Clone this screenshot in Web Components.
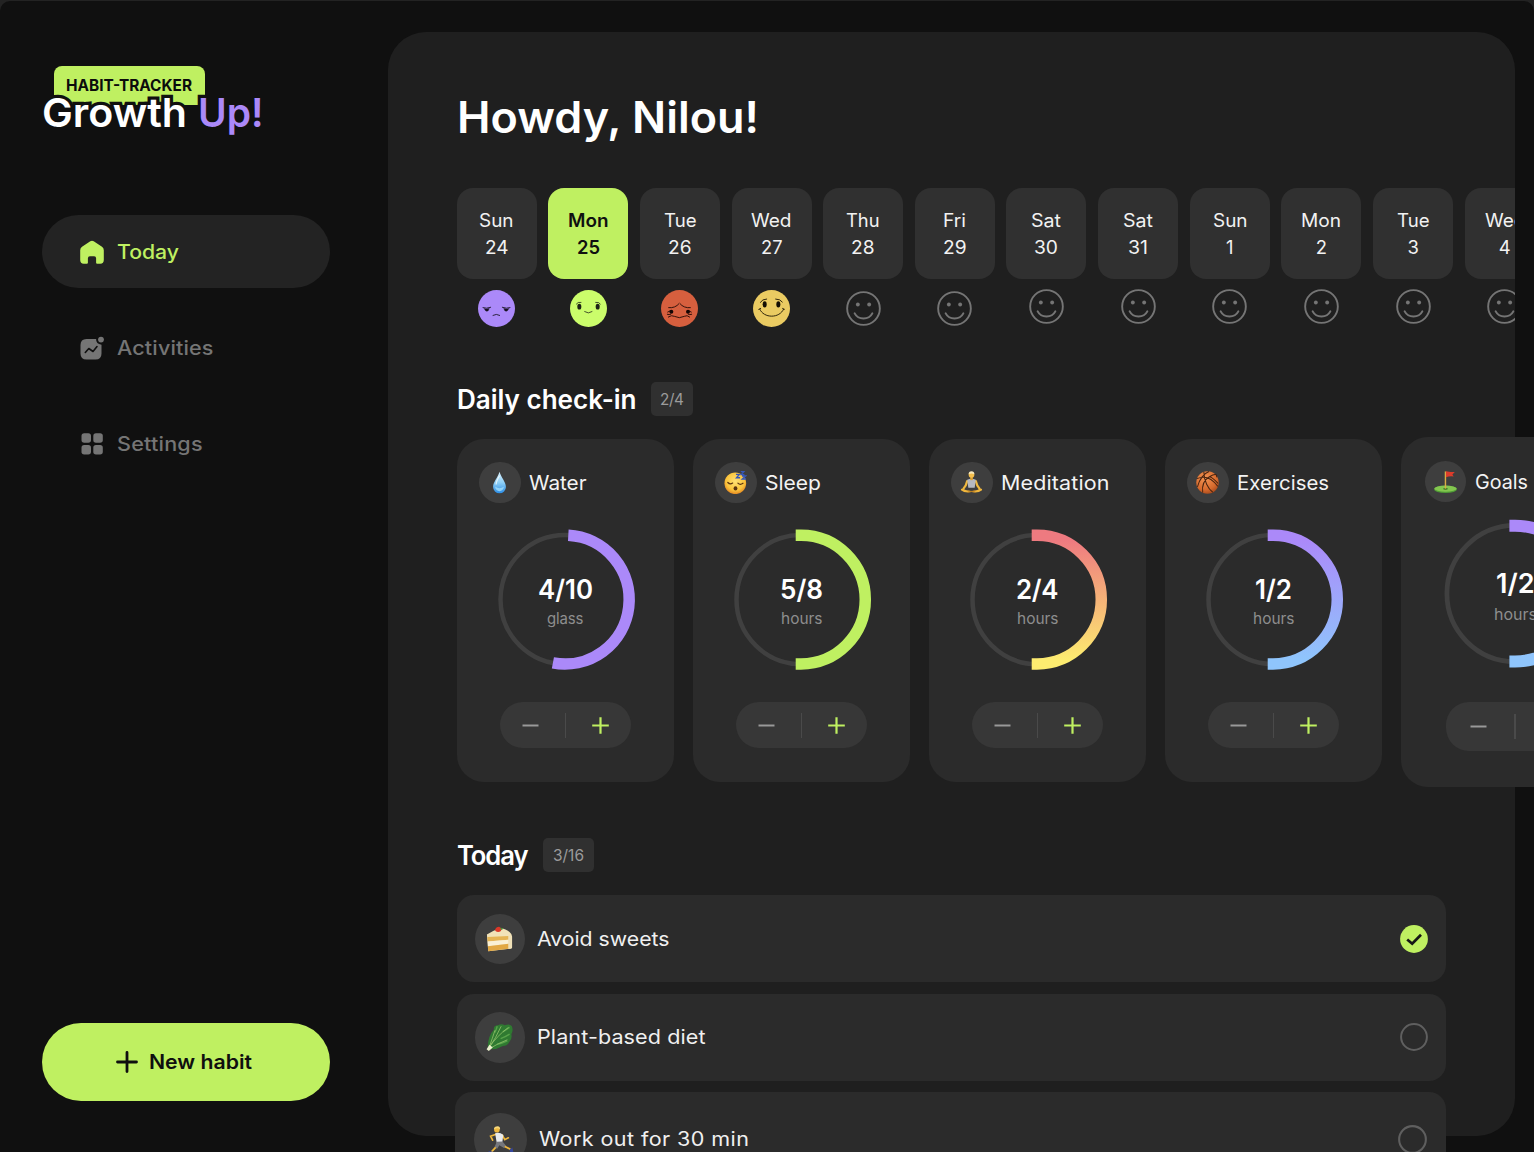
<!DOCTYPE html>
<html lang="en">
<head>
<meta charset="utf-8">
<title>Growth Up!</title>
<style>
  html, body { margin: 0; height: 100%; background: #232323; overflow: hidden; }
  body { font-family: Inter, "Liberation Sans", sans-serif; color: #fff; }
</style>
</head>
<body>
<habit-app></habit-app>
<script>
const GREEN = '#bff061', PURPLE = '#ab89f9';
class Base extends HTMLElement {
  constructor() { super(); this.attachShadow({ mode: 'open' }); }
  connectedCallback() { this.shadowRoot.innerHTML = `<style>:host{box-sizing:border-box}*{box-sizing:border-box}svg{display:block;flex:none}${this.css()}</style>${this.html()}`; }
  a(n, d = '') { return this.getAttribute(n) ?? d; }
  css() { return ''; }
  html() { return '<slot></slot>'; }
}

const FACES = {
  sad: `<circle cx="55.5" cy="55.5" r="55.5" fill="${PURPLE}"/><g stroke="#171320" stroke-width="2.6" fill="none" stroke-linecap="round"><path d="M15 53q10 4 23-1M96 53q-10 4-23-1M45 76q10-6 20 0"/><path d="M19 56q9 2 15-1-2 9-8 9-5-1-7-8zM92 56q-9 2-15-1 2 9 8 9 5-1 7-8z" fill="#171320" stroke-width="1"/></g>`,
  calm: `<circle cx="55.5" cy="55.5" r="55.5" fill="#cbfd6b"/><ellipse cx="28" cy="50" rx="6" ry="8.5" fill="#1c2117"/><ellipse cx="83" cy="50" rx="6" ry="8.5" fill="#1c2117"/><path d="M19 42q4-7 14-5M77 37q10-2 14 5M44 65q11 8 22 0" stroke="#1c2117" stroke-width="2.3" fill="none" stroke-linecap="round"/>`,
  hurt: `<circle cx="55.5" cy="55.5" r="55.5" fill="#d65f3e"/><g stroke="#260d07" stroke-width="2.8" fill="none" stroke-linecap="round"><path d="M23 53q20 2 31-12M88 53q-20 2-31-12M20 66q5-4 12-3M91 66q-5-4-12-3M19 73q6 2 10 0M92 73q-6 2-10 0M22 81q10-7 18-2 15 8 30 0 8-5 16 2"/></g><circle cx="31" cy="65" r="6" fill="#120504"/><circle cx="81" cy="65" r="6" fill="#120504"/>`,
  happy: `<circle cx="55.5" cy="55.5" r="55.5" fill="#eacb62"/><ellipse cx="35" cy="43" rx="6" ry="9.5" fill="#120d03"/><ellipse cx="76" cy="43" rx="6" ry="9.5" fill="#120d03"/><path d="M22 37q6-10 19-10M68 27q14 0 20 9M20 57C32 86 80 86 92 57M17 59q2-3 6-4M89 55q3 0 5 4" stroke="#2b2108" stroke-width="2.9" fill="none" stroke-linecap="round"/>`,
};
customElements.define('mood-face', class extends Base {
  css() { return ':host{display:block;flex:none}'; }
  html() {
    const k = this.a('kind');
    return FACES[k] ? `<svg width="37" height="37" viewBox="0 0 111 111">${FACES[k]}</svg>`
      : `<svg width="35" height="35" viewBox="-.5 -.5 105 105" fill="none" stroke="#757575"><circle cx="52" cy="52" r="49" stroke-width="5.700"/><path d="M25.500 66.500C36 87 68 87 78.500 66.500" stroke-width="6" stroke-linecap="round"/><circle cx="35" cy="40" r="5.800" fill="#757575" stroke="none"/><circle cx="69" cy="40" r="5.800" fill="#757575" stroke="none"/></svg>`;
  }
});

/* Small colour pictures, each on a 24-unit square. */
const PICS = {
  water: `<defs><linearGradient id="g" x2="0" y2="1"><stop offset="0" stop-color="#d9f0fc"/><stop offset=".5" stop-color="#8fd0f8"/><stop offset="1" stop-color="#2b8de6"/></linearGradient></defs><path d="M12 .8C13.600 6.500 18.700 11.500 18.700 16.600a6.700 6.700 0 0 1-13.400 0C5.300 11.500 10.500 6.500 12 .8z" fill="url(#g)"/><path d="M7.500 16.500a4.500 4.500 0 0 0 9 0q-4.500 3-9 0z" fill="#a8e3fd" opacity=".75"/><path d="M12 5q-3.500 6-3.500 9" stroke="#fff" stroke-width="1.300" fill="none" opacity=".7"/>`,
  sleep: `<defs><radialGradient id="g" cx=".5" cy=".4" r=".6"><stop offset="0" stop-color="#ffe174"/><stop offset=".7" stop-color="#fbc43c"/><stop offset="1" stop-color="#e58a22"/></radialGradient></defs><circle cx="11.800" cy="12.800" r="11.300" fill="url(#g)"/><path d="M4 12q2.300 2.400 5 .6M14.500 12.600q2.300 2.400 5.300.2" stroke="#5c3410" stroke-width="1.300" fill="none" stroke-linecap="round"/><ellipse cx="12" cy="18.200" rx="2" ry="2.200" fill="#5c3410"/><path d="M12.500 3.500h3.500l-3 3.500h3.800M17.500.6h3.300l-2.800 3.200h3.300M18.700 5.200h3.900l-3.500 3.100h3.900" stroke="#3657b8" stroke-width="1.400" fill="none"/>`,
  yoga: `<path d="M7.500 10.500Q6.500 15.500 3.500 18.500M16.500 10.500Q17.500 15.500 20.500 18.500" stroke="#efb83f" stroke-width="2.300" fill="none" stroke-linecap="round"/><path d="M7.500 9.200Q12 7.200 16.500 9.200l-1.200 8.300H8.700z" fill="#b5b8c0"/><rect x="10.700" y="5.500" width="2.700" height="4" fill="#dda02e"/><circle cx="12" cy="4" r="3" fill="#f4bf4e"/><path d="M9 3.500Q9 .3 12 .3t3 3.200Q12 1.600 9 3.500z" fill="#f8e9bd"/><path d="M1 18.400q3 0 5 1.400l6 1.200 6-1.200q2-1.400 5-1.400v1.600q-4 3.400-11 2-7 1.400-11-2z" fill="#f0b63c"/><path d="M8 20.500l8 1.600M16 20.500l-8 1.600" stroke="#b87b1e" stroke-width=".8"/>`,
  ball: `<defs><radialGradient id="g" cx=".4" cy=".3" r=".75"><stop offset="0" stop-color="#f39453"/><stop offset=".7" stop-color="#d66a2d"/><stop offset="1" stop-color="#a4481b"/></radialGradient></defs><circle cx="12" cy="12" r="11.700" fill="url(#g)"/><path d="M8.200 1C8 10 13 19 17.500 22.200M1 8Q13 2.500 22.800 16M1.500 16.500Q5 4 13.500.5M7 22.500Q5.500 11 14 6t7.500.5M14 6q3 .5 9 7" stroke="#46220f" stroke-width="1.050" fill="none"/>`,
  golf: `<ellipse cx="12" cy="20.200" rx="12" ry="3.800" fill="#4f9b36"/><ellipse cx="12" cy="19.400" rx="11.700" ry="3.200" fill="#83c74f"/><ellipse cx="12" cy="19.600" rx="2.500" ry=".9" fill="#3c6e26"/><path d="M11.200 1.500h1.500v18h-1.500z" fill="#d8ad45"/><path d="M12.500 1.200q5 1 9.200 1l-2.500 2.500 1.300 2q-4.500-.5-8 .9z" fill="#dc3c2b"/>`,
  cake: `<path d="M.8 8.500Q6 5 12 2.800q7 .3 10.500 5.200l.7 2.200V20q0 .9-1 1L2 23.300z" fill="#f1e2b8"/><path d="M1.200 10.600L20 9.800v3.300L1.400 14.600z" fill="#e5b454"/><path d="M1.500 14.600L20 13v3.700L1.700 18.900z" fill="#faf0d4"/><path d="M1.700 18.900L20 16.700v4.500L2 23.300z" fill="#e2a843"/><path d="M20 8.500q2.500.3 3 2V20q0 .9-3 1.200z" fill="#efe0b8"/><path d="M8 4.300q1-2.700 3.600-2.700 2.500.9 1.700 3.700-1.700 1.200-3.700.7Q8 5.700 8 4.300z" fill="#dc3828"/><path d="M12.500 2.200l3 1-1.700 1.500z" fill="#4a8c37"/>`,
  leaf: `<path d="M1.500 20Q2 10 7 5q-.5-4 3.500-4 4-1.500 6 .2Q21-.6 23 2q1.500 4-.5 7 1 4-1.500 6.500-2 4-6 4-5 3-10.500 3z" fill="#2f7a31"/><path d="M8 7.500Q9.500 4 10 2M15 7q3-2 6-4M13 13q5-2 8-4M10 18q5-1 9-3" stroke="#57a34a" stroke-width="1.200" fill="none"/><path d="M2 22Q9 11 20 3M2.500 21.500Q6 12 8 5.500M3 22Q11 17 19 14M2.500 21.500Q9 12 13.500 2" stroke="#95c46c" stroke-width=".7" fill="none"/><path d="M.5 22.500L3 18.500l3 2.300L2.500 24z" fill="#eaf0cc"/>`,
  run: `<circle cx="8.800" cy="3.300" r="2.500" fill="#efb73c"/><path d="M6.200 3Q6.200.2 9.500.2q2.500.3 2.100 2.800-2-1.800-5.400 0z" fill="#f7d87b"/><path d="M7.500 7.500L3.200 9l1.800 3.600M13.500 8l2.300 4.200 3.200-1.700" stroke="#efb73c" stroke-width="1.500" fill="none" stroke-linecap="round"/><path d="M7.200 6.500q4-1.300 7.300 1.500l-1 7H8.700z" fill="#e9ebee"/><path d="M8.700 14l5.100-.2 3.500 4.200-2.200 1.500-4.100-2.400-2 3.200-2.300-1.600z" fill="#75777c"/><path d="M15.800 18.200l5 2.500M7.700 19L4 23" stroke="#efb73c" stroke-width="1.600"/><path d="M20 21.500l2.500-2.500 1 4.500-2 1zM1.500 22.500l3.300.2 1 2-4.800.3z" fill="#35469b"/>`,
};
customElements.define('round-pic', class extends Base {
  css() { return `:host{display:flex;flex:none;align-items:center;justify-content:center;width:${this.a('d')}px;height:${this.a('d')}px;border-radius:50%;background:#3e3e3e}`; }
  html() { const s = this.a('s'); return `<svg width="${s}" height="${s}" viewBox="0 0 24 24">${PICS[this.a('kind')]}</svg>`; }
});

customElements.define('brand-logo', class extends Base {
  css() { return `:host{display:block;height:73px;padding-left:12px;white-space:nowrap}
    .tag{display:flex;justify-content:center;width:150.500px;height:39px;border-radius:8px 8px 0 0;background:${GREEN};color:#0c0c0c;font:700 15.800px/39px Inter}
    .name{position:relative;display:flex;gap:11px;margin:-18px 0 0 -12px;font:600 40px/52px Inter;-webkit-text-stroke:6.500px #101010;paint-order:stroke fill;stroke-linejoin:round}
    .up{color:${PURPLE}}`; }
  html() { return `<div class="tag"><fit-text w="126">HABIT-TRACKER</fit-text></div><div class="name"><fit-text w="145">Growth</fit-text><fit-text class="up" w="65.500">Up!</fit-text></div>`; }
});

const NAV = {
  home: `<path d="M10.300 1.200q1.700-1 3.400 0l8.300 5.600q1.800 1.300 1.800 3.500v9.800q0 3.700-3.500 3.700h-3.100q-1.100 0-1.100-1.100v-4.500q0-2-2-2h-4.200q-2 0-2 2v4.500q0 1.100-1.100 1.100H3.700Q.2 23.800.2 20.100v-9.800Q.2 8 2 6.800z"/>`,
  chart: `<path d="M6 3h9.600q-.2 5 5.400 5.700V17.500q0 6-6 6H6q-6 0-6-6V9q0-6 6-6z" transform="translate(.5 0)"/><path d="M5.300 16.500l3.500-4 4.200 3 4-5" stroke="#101010" stroke-width="1.600" fill="none" stroke-linecap="round" stroke-linejoin="round"/><circle cx="21" cy="3.600" r="2.900"/>`,
  grid: `<rect x="1.500" y="1.300" width="9.500" height="9.500" rx="2.700"/><rect x="13.300" y="1.300" width="9.500" height="9.500" rx="2.700"/><rect x="1.500" y="13" width="9.500" height="9.500" rx="2.700"/><rect x="13.300" y="13" width="9.500" height="9.500" rx="2.700"/>`,
};
customElements.define('nav-item', class extends Base {
  css() { return `:host{display:flex;align-items:center;gap:13px;height:73px;padding-left:38px;border-radius:37px;color:#757575;font-size:19.800px;font-weight:500}
    :host([active]){background:#232323;color:${GREEN}}`; }
  html() { return `<svg width="24" height="24" viewBox="0 0 24 24" fill="currentColor">${NAV[this.a('icon')]}</svg><slot></slot>`; }
});
customElements.define('new-habit', class extends Base {
  css() { return `:host{display:flex;align-items:center;justify-content:center;gap:11px;height:78px;border-radius:39px;background:${GREEN};color:#0f0f0f;font-size:19.800px;font-weight:600;padding-right:4.500px}`; }
  html() { return `<svg width="22" height="22" viewBox="0 0 22 22" stroke="#0f0f0f" stroke-width="2.800" stroke-linecap="round"><path d="M11 1.500v19M1.500 11h19"/></svg><fit-text w="103">New habit</fit-text>`; }
});
customElements.define('side-bar', class extends Base {
  css() { return `:host{display:flex;flex-direction:column;width:388px;flex:none;padding:65px 58px 51px 42px}
    nav{display:flex;flex-direction:column;gap:23px;margin-top:76px}new-habit{margin-top:auto}`; }
  html() { return `<brand-logo></brand-logo><nav>
    <nav-item icon="home" active><fit-text w="62">Today</fit-text></nav-item>
    <nav-item icon="chart"><fit-text w="96.500">Activities</fit-text></nav-item>
    <nav-item icon="grid"><fit-text w="85.500">Settings</fit-text></nav-item></nav><new-habit></new-habit>`; }
});

customElements.define('day-cell', class extends Base {
  css() { return `:host{display:flex;flex-direction:column;flex:none;width:80px}
    .box{display:flex;flex-direction:column;align-items:center;justify-content:center;height:91.500px;border-radius:16px;background:#303030;font-size:18.400px;line-height:27.500px;color:#f2f2f2;padding-top:1.500px}
    :host([active]) .box{background:${GREEN};color:#101010;font-weight:600}
    .mood{display:flex;align-items:center;justify-content:center;height:59px}
    .mood.up{padding-bottom:4px}`; }
  html() { return `<div class="box"><fit-text w="${this.a('w')}">${this.a('day')}</fit-text><fit-text w="${this.a('nw')}">${this.a('num')}</fit-text></div><div class="mood ${this.hasAttribute('up') ? 'up' : ''}"><mood-face kind="${this.a('mood')}"></mood-face></div>`; }
});
const DAYS = [['Sun',24,34.5,23.5,'sad'],['Mon',25,40.5,23,'calm'],['Tue',26,32.5,23.5,'hurt'],['Wed',27,40.5,21.5,'happy'],['Thu',28,33.5,23.5,''],['Fri',29,23,23.5,''],['Sat',30,30,24,''],['Sat',31,30,20,''],['Sun',1,34.5,9,''],['Mon',2,40,12,''],['Tue',3,32.5,12,''],['Wed',4,40.5,12.5,'']];
customElements.define('day-strip', class extends Base {
  css() { return ':host{display:flex;gap:11.660px;overflow:hidden}'; }
  html() { return DAYS.map((d, i) => `<day-cell day="${d[0]}" num="${d[1]}" w="${d[2]}" nw="${d[3]}" mood="${d[4]}" ${i === 1 ? 'active' : ''} ${i > 5 ? 'up' : ''}></day-cell>`).join(''); }
});

customElements.define('section-head', class extends Base {
  css() { return `:host{display:flex;align-items:center;gap:15px;height:34px;font-size:26.400px;font-weight:600}
    .count{display:flex;align-items:center;justify-content:center;width:${this.a('bw')}px;height:34px;border-radius:5px;background:#303030;color:#9b9b9b;font-size:15.800px;font-weight:400}`; }
  html() { return `<fit-text w="${this.a('w')}">${this.a('name')}</fit-text><span class="count"><fit-text w="${this.a('cw')}">${this.a('count')}</fit-text></span>`; }
});

customElements.define('habit-card', class extends Base {
  css() { return `:host{display:flex;flex-direction:column;flex:none;width:217.500px;height:343px;border-radius:27px;background:#2b2b2b;padding-top:22.500px}
    header{display:flex;align-items:center;gap:8.700px;padding-left:22.500px;font-size:19.700px;color:#f3f3f3}
    .ring{display:grid;width:144px;margin:24.500px auto 0;place-items:center}
    .ring>*{grid-area:1/1}
    .val{display:flex;flex-direction:column;align-items:center;font-size:26.600px;font-weight:600;line-height:32px;padding-top:6px}
    .val span{font-size:15.400px;font-weight:400;line-height:27px;color:#8e8e8e}
    .step{display:flex;align-items:center;justify-content:space-between;width:130.500px;height:46px;margin:30.500px auto 0;padding:0 22px;border-radius:23px;background:#373737}
    i{width:1.300px;height:25px;background:#4a4a4a}
    :host([big]){width:229px;height:350px;margin-top:-2.500px;padding-top:24px}
    :host([big]) header{padding-left:24px}
    :host([big]) .ring{margin-top:16px;width:152px}
    :host([big]) .val{padding-top:8px}
    :host([big]) .val span{line-height:31px}
    :host([big]) .step{margin-top:32px;width:138px;height:49px;padding:0 24px}`; }
  html() {
    const c1 = this.a('c1'), c2 = this.a('c2'), big = this.hasAttribute('big'), s = big ? 152 : 144;
    const arc = this.hasAttribute('tilt') ? 'M75.300 7.300A64.400 64.400 0 1 1 59.900 134.900' : 'M66.700 7.300H72A64.300 64.300 0 0 1 72 135.900H66.700';
    return `<header><round-pic d="41.500" s="23" kind="${this.a('icon')}"></round-pic><fit-text w="${this.a('w')}">${this.a('name')}</fit-text></header>
    <div class="ring"><svg width="${s}" height="${s}" viewBox="0 0 144 144" fill="none"><defs><linearGradient id="r" gradientUnits="userSpaceOnUse" x1="72" y1="12" x2="72" y2="132"><stop stop-color="${c1}"/><stop offset="1" stop-color="${c2}"/></linearGradient></defs><circle cx="72" cy="71.600" r="64.500" stroke="#404040" stroke-width="4.500"/><path d="${arc}" stroke="url(#r)" stroke-width="11.500"/></svg>
    <div class="val"><fit-text w="${this.a('vw')}">${this.a('value')}</fit-text><span><fit-text w="${this.a('uw')}">${this.a('unit')}</fit-text></span></div></div>
    <div class="step"><svg width="17" height="17" viewBox="0 0 17 17" stroke="#999" stroke-width="2"><path d="M.5 8.500h16"/></svg><i></i><svg width="17" height="17" viewBox="0 0 17 17" stroke="${GREEN}" stroke-width="2.200"><path d="M.2 8.500h16.600M8.500.2v16.600"/></svg></div>`;
  }
});

customElements.define('task-row', class extends Base {
  css() { return `:host{display:flex;align-items:center;flex:none;gap:12px;width:989.500px;height:87px;padding:0 18px;border-radius:17px;background:#2b2b2b;font-size:19.800px;color:#f0f0f0}
    .mark{margin-left:auto}
    :host([big]){width:991.500px;height:94px;margin-left:-2px;padding:0 19px}`; }
  html() {
    const big = this.hasAttribute('big'), m = big ? 29 : 28;
    const mark = this.hasAttribute('done')
      ? `<circle cx="14" cy="14" r="13.900" fill="${GREEN}"/><path d="M7.200 14.400l5 4.300 8.800-9" stroke="#161616" stroke-width="2.700" fill="none"/>`
      : `<circle cx="14" cy="14" r="12.900" fill="none" stroke="#5f5f5f" stroke-width="2"/>`;
    return `<round-pic d="${big ? 53 : 50.5}" s="27" kind="${this.a('icon')}"></round-pic><fit-text w="${this.a('w')}">${this.a('name')}</fit-text><svg class="mark" width="${m}" height="${m}" viewBox="0 0 28 28">${mark}</svg>`;
  }
});

customElements.define('main-panel', class extends Base {
  css() { return `:host{display:block;flex:none;width:1126.700px;height:1104px;margin-top:30.500px;padding:55px 0 0 68.550px;border-radius:38px;background:#1f1f1f}
    h1{margin:0;height:60px;padding-left:.5px;font-size:43.700px;line-height:61px;font-weight:600}
    day-strip{margin-top:41px}
    .daily{margin-top:44.300px}
    .cards{display:flex;gap:18.500px;height:343px;margin-top:23.200px}
    .today{margin-top:55.800px}
    .rows{display:flex;flex-direction:column;gap:11.500px;margin-top:23px}`; }
  html() { return `<h1><fit-text w="302">Howdy, Nilou!</fit-text></h1><day-strip></day-strip>
    <section-head class="daily" name="Daily check-in" w="179.500" count="2/4" cw="24" bw="42.200"></section-head>
    <div class="cards">
      <habit-card icon="water" name="Water" w="57.500" value="4/10" vw="55" unit="glass" uw="36.500" c1="${PURPLE}" c2="${PURPLE}" tilt></habit-card>
      <habit-card icon="sleep" name="Sleep" w="56" value="5/8" vw="43" unit="hours" uw="41.500" c1="${GREEN}" c2="${GREEN}"></habit-card>
      <habit-card icon="yoga" name="Meditation" w="108.500" value="2/4" vw="42.500" unit="hours" uw="41.500" c1="#ee7a80" c2="#fdec70"></habit-card>
      <habit-card icon="ball" name="Exercises" w="92" value="1/2" vw="37" unit="hours" uw="41.500" c1="${PURPLE}" c2="#8fc5fc"></habit-card>
      <habit-card icon="golf" name="Goals" w="53" value="1/2" vw="38.500" unit="hours" uw="43" c1="${PURPLE}" c2="#8fc5fc" big></habit-card>
    </div>
    <section-head class="today" name="Today" w="71.500" count="3/16" cw="31" bw="50.500"></section-head>
    <div class="rows">
      <task-row icon="cake" name="Avoid sweets" w="132.500" done></task-row>
      <task-row icon="leaf" name="Plant-based diet" w="168.500"></task-row>
      <task-row icon="run" name="Work out for 30 min" w="210" big></task-row>
    </div>`; }
});

customElements.define('habit-app', class extends Base {
  css() { return ':host{display:flex;width:1534px;height:1151px;margin-top:1px;border-radius:10px 10px 0 0;background:#101010;overflow:hidden}'; }
  html() { return '<side-bar></side-bar><main-panel></main-panel>'; }
});

/* One line of text that takes the width given in "w": the glyphs are widened
   a little, and tracking makes up the rest. */
customElements.define('fit-text', class extends Base {
  css() { return ':host{display:inline-block;flex:none;white-space:nowrap}span{display:inline-block;transform-origin:0 50%}'; }
  html() { return '<span><slot></slot></span>'; }
  connectedCallback() {
    super.connectedCallback();
    const span = this.shadowRoot.querySelector('span');
    const n = this.textContent.length, w = parseFloat(this.a('w'));
    const natural = span.getBoundingClientRect().width;
    const k = n > 1 ? Math.min(1.09, Math.max(.97, w / natural)) : 1;
    if (n > 1) span.style.letterSpacing = (w / k - natural) / (n - 1) + 'px';
    span.style.transform = `scaleX(${k})`;
    this.style.width = (n > 1 ? w : natural) + 'px';
  }
});
</script>
</body>
</html>
